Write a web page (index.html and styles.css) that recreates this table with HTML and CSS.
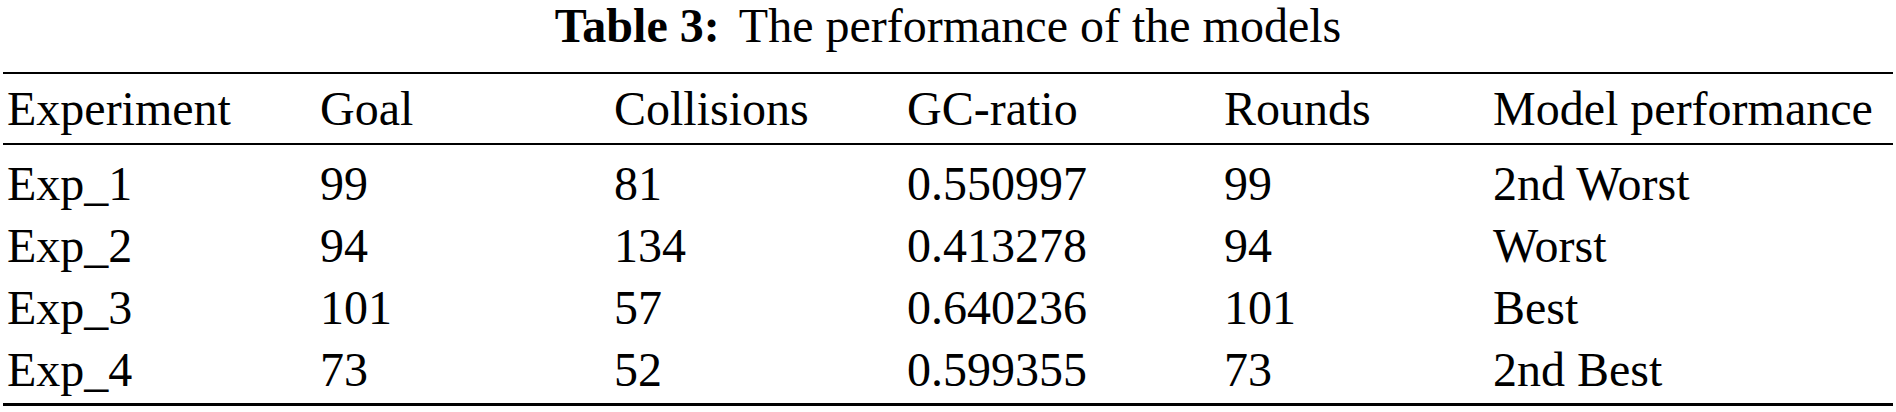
FILE: index.html
```html
<!DOCTYPE html>
<html lang="en">
<head>
    <meta charset="UTF-8">
    <meta name="viewport" content="width=device-width, initial-scale=1.0">
    <title>Table 3 - Model performance</title>
    <link rel="stylesheet" href="styles.css">
</head>
<body>

<div class="caption"><b>Table 3:</b> The performance of the models</div>

<table class="results">
    <colgroup>
        <col class="col-exp">
        <col class="col-goal">
        <col class="col-coll">
        <col class="col-ratio">
        <col class="col-rounds">
        <col class="col-perf">
    </colgroup>
    <thead>
        <tr>
            <th>Experiment</th>
            <th>Goal</th>
            <th>Collisions</th>
            <th>GC-ratio</th>
            <th>Rounds</th>
            <th>Model performance</th>
        </tr>
    </thead>
    <tbody>
        <tr>
            <td>Exp_1</td>
            <td>99</td>
            <td>81</td>
            <td>0.550997</td>
            <td>99</td>
            <td>2nd Worst</td>
        </tr>
        <tr>
            <td>Exp_2</td>
            <td>94</td>
            <td>134</td>
            <td>0.413278</td>
            <td>94</td>
            <td>Worst</td>
        </tr>
        <tr>
            <td>Exp_3</td>
            <td>101</td>
            <td>57</td>
            <td>0.640236</td>
            <td>101</td>
            <td>Best</td>
        </tr>
        <tr>
            <td>Exp_4</td>
            <td>73</td>
            <td>52</td>
            <td>0.599355</td>
            <td>73</td>
            <td>2nd Best</td>
        </tr>
    </tbody>
</table>

</body>
</html>
```

FILE: styles.css
```css
* {
    margin: 0;
    padding: 0;
    box-sizing: border-box;
}

body {
    font-family: 'Liberation Serif', 'Times New Roman', serif;
    background-color: #fff;
    color: #000;
}

.caption {
    text-align: center;
    font-size: 48px;
    line-height: 52px;
    margin-bottom: 20px;
}

.caption b {
    margin-right: 8px;
}

.results {
    width: 1890px;
    margin: 0 3px;
    border-collapse: separate;
    border-spacing: 0;
    font-size: 48px;
    line-height: 62px;
    table-layout: fixed;
}

.col-exp { width: 313px; }
.col-goal { width: 294px; }
.col-coll { width: 293px; }
.col-ratio { width: 317px; }
.col-rounds { width: 269px; }
.col-perf { width: 404px; }

.results th,
.results td {
    text-align: left;
    font-weight: normal;
    padding: 0 0 0 4px;
    white-space: nowrap;
}

.results thead th {
    border-top: 2px solid #000;
    border-bottom: 2px solid #000;
    padding-top: 4px;
    padding-bottom: 3px;
}

.results tbody tr:first-child td {
    padding-top: 8px;
}

.results tbody tr:last-child td {
    padding-bottom: 2px;
    border-bottom: 3px solid #000;
}
```
